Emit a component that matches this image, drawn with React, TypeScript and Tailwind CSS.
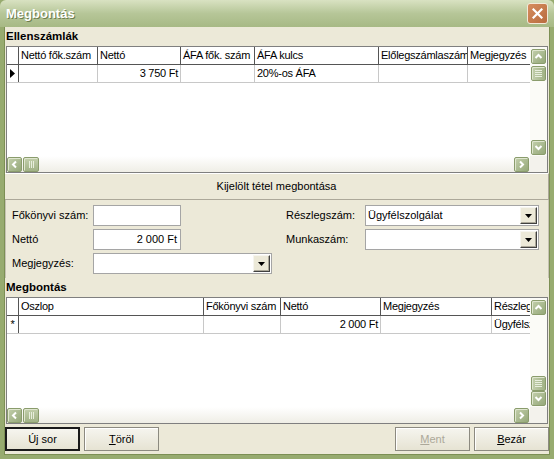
import React from 'react'

type Dir = 'up' | 'down' | 'left' | 'right'

function Chevron({ dir }: { dir: Dir }) {
  const paths: Record<Dir, string> = {
    up: 'M1.5 6 L4.5 3 L7.5 6',
    down: 'M1.5 3 L4.5 6 L7.5 3',
    left: 'M6 1.5 L3 4.5 L6 7.5',
    right: 'M3 1.5 L6 4.5 L3 7.5',
  }
  return (
    <svg width="9" height="9" viewBox="0 0 9 9">
      <path d={paths[dir]} fill="none" stroke="white" strokeWidth="2" />
    </svg>
  )
}

function ScrollBtn({ dir }: { dir: Dir }) {
  return (
    <div className="w-[15px] h-[15px] shrink-0 rounded-[2px] border border-[#8a9c6c] bg-gradient-to-br from-[#c3cfac] to-[#95a879] shadow-[inset_1px_1px_0_#dfe6cf] flex items-center justify-center">
      <Chevron dir={dir} />
    </div>
  )
}

function VThumb() {
  return (
    <div className="w-[15px] h-[15px] shrink-0 rounded-[2px] border border-[#8a9c6c] bg-gradient-to-r from-[#c3cfac] to-[#a1b286] shadow-[inset_1px_1px_0_#dfe6cf] flex flex-col items-center justify-center gap-[1px]">
      <div className="w-[7px] h-[1px] bg-[#e8eedd]" />
      <div className="w-[7px] h-[1px] bg-[#e8eedd]" />
      <div className="w-[7px] h-[1px] bg-[#e8eedd]" />
      <div className="w-[7px] h-[1px] bg-[#e8eedd]" />
    </div>
  )
}

function HThumb() {
  return (
    <div className="w-[16px] h-[15px] shrink-0 rounded-[2px] border border-[#8a9c6c] bg-gradient-to-b from-[#c3cfac] to-[#a1b286] shadow-[inset_1px_1px_0_#dfe6cf] flex items-center justify-center gap-[1px]">
      <div className="h-[7px] w-[1px] bg-[#e8eedd]" />
      <div className="h-[7px] w-[1px] bg-[#e8eedd]" />
      <div className="h-[7px] w-[1px] bg-[#e8eedd]" />
    </div>
  )
}

type Col = { label: string; w: string; value?: string; right?: boolean }

function Grid({ cols, marker, thumbBottom }: { cols: Col[]; marker: React.ReactNode; thumbBottom?: boolean }) {
  return (
    <div className="mx-[1px] h-[127px] border border-[#7f7f7f] bg-white flex flex-col">
      <div className="flex flex-1 min-h-0">
        <div className="flex-1 min-w-0 overflow-hidden tracking-[-0.25px]">
          <div className="flex h-[18px] border-b border-[#555555]">
            <div className="w-[12px] shrink-0 border-r border-[#555555]" />
            {cols.map((c) => (
              <div key={c.label} className={`${c.w} shrink-0 border-r border-[#555555] px-[2px] leading-[17px] whitespace-nowrap overflow-hidden`}>
                {c.label}
              </div>
            ))}
          </div>
          <div className="flex h-[18px] border-b border-[#c8c8c8]">
            <div className="w-[12px] shrink-0 border-r border-[#555555] flex items-center justify-center">{marker}</div>
            {cols.map((c) => (
              <div
                key={c.label}
                className={`${c.w} shrink-0 border-r border-[#c8c8c8] px-[2px] leading-[17px] whitespace-nowrap overflow-hidden ${c.right ? 'text-right' : ''}`}
              >
                {c.value}
              </div>
            ))}
          </div>
        </div>
        <div className="w-[17px] shrink-0 bg-[#fbfbf7] flex flex-col items-center pt-[2px] pb-[1px]">
          <ScrollBtn dir="up" />
          {thumbBottom ? (
            <>
              <div className="flex-1" />
              <VThumb />
            </>
          ) : (
            <>
              <div className="h-[2px]" />
              <VThumb />
              <div className="flex-1" />
            </>
          )}
          <ScrollBtn dir="down" />
        </div>
      </div>
      <div className="h-[16px] shrink-0 flex bg-gradient-to-b from-[#ffffff] to-[#efeee6]">
        <div className="flex-1 flex items-center pl-[0px] pr-[1px]">
          <ScrollBtn dir="left" />
          <div className="w-[1px]" />
          <HThumb />
          <div className="flex-1" />
          <ScrollBtn dir="right" />
        </div>
        <div className="w-[17px] shrink-0 bg-[#f3f2ec]" />
      </div>
    </div>
  )
}

function Combo({ w, value }: { w: string; value?: string }) {
  return (
    <div className={`${w} h-[21px] bg-white border border-[#a5a5a5] flex items-center p-[1px]`}>
      <div className="flex-1 pl-[1px] leading-[17px] whitespace-nowrap overflow-hidden">{value}</div>
      <div className="w-[17px] h-[17px] bg-[#ece9d8] border border-t-[#f6f5ef] border-l-[#f6f5ef] border-b-[#404040] border-r-[#404040] shadow-[inset_-1px_-1px_0_#aca899] flex items-center justify-center">
        <svg width="7" height="4" viewBox="0 0 7 4">
          <path d="M0 0 H7 L3.5 4 Z" fill="black" />
        </svg>
      </div>
    </div>
  )
}

function Field({ value }: { value?: string }) {
  return (
    <div className="w-[88px] h-[21px] bg-white border border-[#a5a5a5] px-[3px] text-right leading-[19px]">{value}</div>
  )
}

function Button({ children, isDefault, disabled }: { children: React.ReactNode; isDefault?: boolean; disabled?: boolean }) {
  return (
    <div
      className={`w-[75px] h-[24px] flex items-center justify-center bg-gradient-to-b from-[#f6f5ef] to-[#e6e3d3] ${
        isDefault ? 'border-2 border-[#1a1a1a]' : 'border border-[#8c8a80] shadow-[inset_1px_1px_0_#ffffff]'
      } ${disabled ? 'text-[#aca899]' : 'text-black'}`}
    >
      {children}
    </div>
  )
}

export default function App() {
  const cols1: Col[] = [
    { label: 'Nettó fők.szám', w: 'w-[79px]' },
    { label: 'Nettó', w: 'w-[83px]', value: '3 750 Ft', right: true },
    { label: 'ÁFA fők. szám', w: 'w-[74px]' },
    { label: 'ÁFA kulcs', w: 'w-[124px]', value: '20%-os ÁFA' },
    { label: 'Előlegszámlaszám', w: 'w-[89px]' },
    { label: 'Megjegyzés', w: 'w-[90px]' },
  ]
  const cols2: Col[] = [
    { label: 'Oszlop', w: 'w-[185px]' },
    { label: 'Főkönyvi szám', w: 'w-[77px]' },
    { label: 'Nettó', w: 'w-[100px]', value: '2 000 Ft', right: true },
    { label: 'Megjegyzés', w: 'w-[111px]' },
    { label: 'Részleg', w: 'w-[80px]', value: 'Ügyfélszolgálat' },
  ]

  return (
    <div className="w-[554px] h-[459px] flex flex-col bg-[#97ab6f] text-[11px] text-black font-['Liberation_Sans',Arial,sans-serif] select-none">
      {/* title bar */}
      <div className="h-[27px] shrink-0 flex items-center pl-[6px] pr-[6px] bg-gradient-to-b from-[#d9e2c2] via-[#b6c698] to-[#a7b985] rounded-t-[6px]">
        <div className="flex-1 text-white font-bold text-[13px] [text-shadow:1px_1px_0_#6d7d4e]">Megbontás</div>
        <div className="w-[21px] h-[21px] rounded-[3px] border border-[#f2e9d9] bg-gradient-to-br from-[#d68d5e] to-[#b86c3f] flex items-center justify-center">
          <svg width="11" height="11" viewBox="0 0 11 11">
            <path d="M1.5 1.5 L9.5 9.5 M9.5 1.5 L1.5 9.5" stroke="white" strokeWidth="2.2" strokeLinecap="square" />
          </svg>
        </div>
      </div>

      {/* client */}
      <div className="flex-1 flex flex-col mx-[4px] mb-[4px] bg-[#ece9d8] border-x border-b border-[#7c8f54]">
        <div className="h-[19px] shrink-0 flex items-center pl-[1px] font-bold text-[11.5px]">Ellenszámlák</div>
        <Grid cols={cols1} marker={<svg width="5" height="9" viewBox="0 0 5 9"><path d="M0 0 L5 4.5 L0 9 Z" fill="black" /></svg>} />

        <div className="h-[27px] shrink-0 flex items-center justify-center border-t border-b border-r border-t-[#ffffff] border-b-[#aca899] border-r-[#aca899]">
          Kijelölt tétel megbontása
        </div>

        <div className="h-[78px] shrink-0 flex flex-col gap-[2px] pt-[5px] border-x border-[#c5c2b2]">
          <div className="flex items-center h-[21px]">
            <div className="w-[87px] pl-[6px]">Főkönyvi szám:</div>
            <Field />
            <div className="w-[105px]" />
            <div className="w-[79px]">Részlegszám:</div>
            <Combo w="w-[174px]" value="Ügyfélszolgálat" />
          </div>
          <div className="flex items-center h-[21px] mt-[1px]">
            <div className="w-[87px] pl-[6px]">Nettó</div>
            <Field value="2 000 Ft" />
            <div className="w-[105px]" />
            <div className="w-[79px]">Munkaszám:</div>
            <Combo w="w-[174px]" />
          </div>
          <div className="flex items-center h-[21px] mt-[1px]">
            <div className="w-[87px] pl-[6px]">Megjegyzés:</div>
            <Combo w="w-[179px]" />
          </div>
        </div>

        <div className="h-[19px] shrink-0 flex items-center pl-[1px] font-bold text-[11.5px]">Megbontás</div>
        <Grid cols={cols2} marker={<span className="text-[11px] leading-none">*</span>} thumbBottom />

        <div className="flex-1 flex items-center">
          <Button isDefault>
            Ú<span className="underline">j</span>&nbsp;sor
          </Button>
          <div className="w-[4px]" />
          <Button>
            <span className="underline">T</span>öröl
          </Button>
          <div className="flex-1" />
          <Button disabled>
            <span className="underline">M</span>ent
          </Button>
          <div className="w-[4px]" />
          <Button>
            <span className="underline">B</span>ezár
          </Button>
        </div>
      </div>
    </div>
  )
}
